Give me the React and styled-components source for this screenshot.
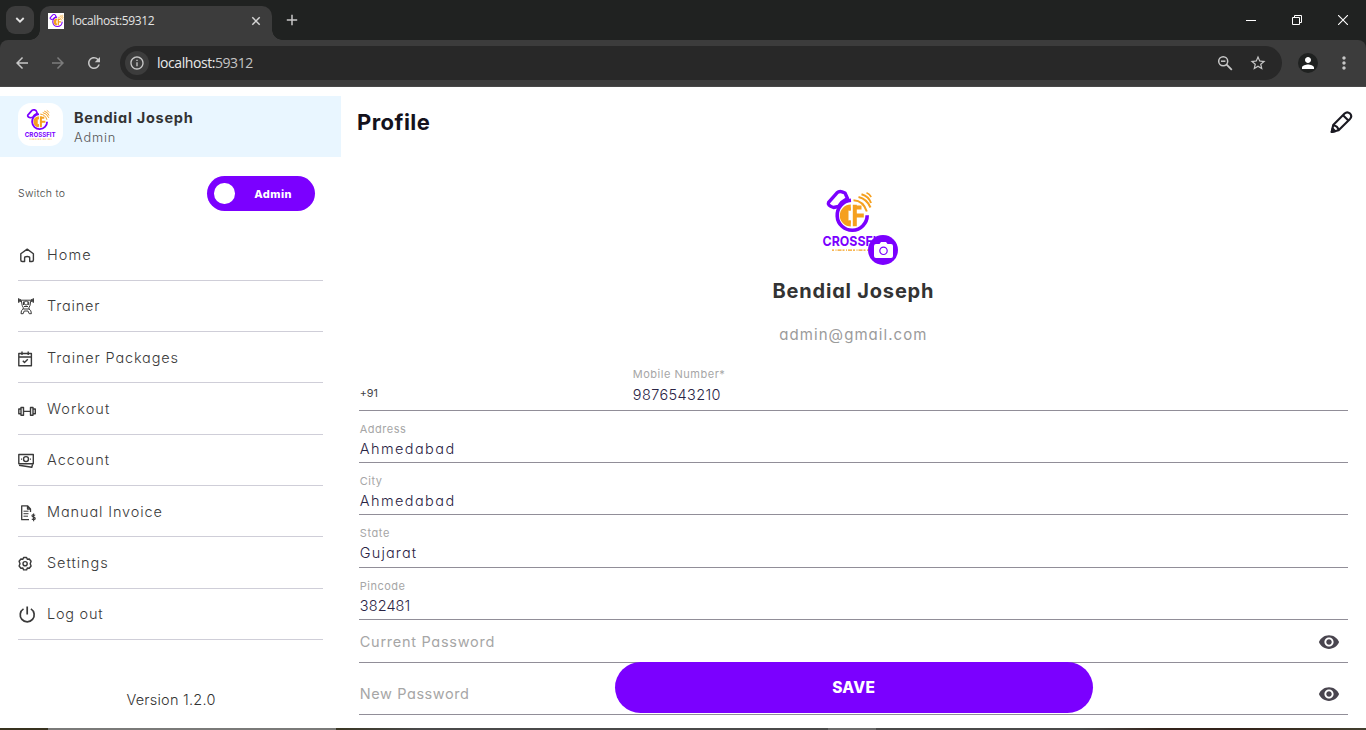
import React from 'react';
import styled, { createGlobalStyle } from 'styled-components';
import { MdArrowBack, MdArrowForward, MdRefresh, MdInfoOutline, MdStarOutline, MdMoreVert, MdPerson, MdVisibility } from 'react-icons/md';

const GlobalStyle = createGlobalStyle`
  * { box-sizing: border-box; }
  body {
    margin: 0;
    background: #fff;
    color: #333;
    font-family: Inter, 'Liberation Sans', sans-serif;
    font-feature-settings: 'cv11';
    overflow: hidden;
  }
  svg { display: block; flex: none; }
`;

/* ---------- shared text ---------- */

const Text = styled.span`
  font-size: ${(p) => p.$size || 14.5}px;
  font-weight: ${(p) => p.$weight || 400};
  letter-spacing: ${(p) => p.$track || 0}px;
  color: ${(p) => p.$color || 'inherit'};
  line-height: ${(p) => (p.$line ? `${p.$line}px` : '20px')};
  white-space: nowrap;
`;

/* ---------- browser frame ---------- */

const Window = styled.div`
  height: 730px;
  width: 1366px;
  display: flex;
  flex-direction: column;
`;

const TabStrip = styled.header`
  height: 40px;
  flex: none;
  display: flex;
  background: #202221;
  padding: 6px 0 0 6px;
`;

const TabSearch = styled.div`
  width: 28px;
  height: 28px;
  border-radius: 9px;
  background: #3c3c3c;
  display: grid;
  place-items: center;
`;

const Tab = styled.div`
  position: relative;
  width: 232px;
  height: 34px;
  margin-left: 6px;
  padding: 0 11px 5px 8px;
  border-radius: 10px 10px 0 0;
  background: #3c3c3c;
  color: #e3e3e3;
  display: flex;
  align-items: center;
  gap: 8px;
  font-family: 'Open Sans', 'Noto Sans', sans-serif;
  &::before,
  &::after {
    content: '';
    position: absolute;
    bottom: 0;
    width: 10px;
    height: 10px;
  }
  &::before {
    left: -10px;
    background: radial-gradient(circle at 0 0, transparent 9.5px, #3c3c3c 10px);
  }
  &::after {
    right: -10px;
    background: radial-gradient(circle at 100% 0, transparent 9.5px, #3c3c3c 10px);
  }
`;

const Favicon = styled.div`
  width: 16px;
  height: 16px;
  background: #fff;
  display: grid;
  place-items: center;
`;

const TabTitle = styled(Text)`
  flex: 1;
`;

const NewTab = styled.div`
  width: 40px;
  height: 28px;
  display: grid;
  place-items: center;
`;

const WindowControls = styled.div`
  display: flex;
  margin-left: auto;
  height: 28px;
`;

const WindowControl = styled.div`
  width: 46px;
  display: grid;
  place-items: center;
`;

const ToolbarBack = styled.div`
  flex: none;
  background: #202221;
`;

const Toolbar = styled.nav`
  height: 47px;
  padding: 0 4px;
  display: flex;
  align-items: center;
  background: #3c3c3c;
  border-bottom: 1px solid #484848;
  border-radius: 8px 8px 0 0;
  color: #c7c7c7;
`;

const ToolButton = styled.div`
  width: 36px;
  display: grid;
  place-items: center;
  color: ${(p) => (p.$dim ? '#7c7c7c' : '#c7c7c7')};
`;

const AddressBar = styled.div`
  flex: 1;
  height: 34px;
  margin: 0 8px;
  padding: 0 8px 0 5px;
  border-radius: 17px;
  background: #282828;
  display: flex;
  align-items: center;
  font-family: 'Open Sans', 'Noto Sans', sans-serif;
`;

const SiteInfo = styled.div`
  width: 24px;
  height: 24px;
  margin-right: 8px;
  border-radius: 50%;
  background: #3c3c3c;
  display: grid;
  place-items: center;
`;

const Url = styled(Text)`
  flex: 1;
  color: #e8e8e8;
  em { font-style: normal; color: #c4c4c4; }
`;

const AddressAction = styled.div`
  width: ${(p) => p.$width || 32}px;
  display: grid;
  place-items: center;
`;

const Account = styled.div`
  width: 20px;
  height: 20px;
  border-radius: 50%;
  background: #1f2120;
  color: #fff;
  display: grid;
  place-items: center;
`;

const Taskbar = styled.footer`
  height: 2px;
  flex: none;
  background: linear-gradient(
    90deg,
    #38321f 0 48px, #7a7a78 48px 336px, #3a3724 336px, #4a4a4a 420px 828px,
    #6b6b6b 828px 876px, #4a4a4a 876px 1080px, #33231a 1160px 1240px, #42402f 1366px
  );
`;

/* ---------- page ---------- */

const Page = styled.div`
  flex: 1;
  min-height: 0;
  display: flex;
  background: #fff;
`;

const Sidebar = styled.aside`
  width: 342px;
  padding-top: 9px;
  display: flex;
  flex-direction: column;
`;

const UserCard = styled.div`
  width: 341.4px;
  height: 61px;
  padding: 0 18px;
  display: flex;
  align-items: center;
  gap: 11px;
  background: #e9f6ff;
`;

const UserLogo = styled.div`
  width: 45px;
  height: 43px;
  margin-bottom: 4px;
  padding: 1px 0 0 3px;
  border-radius: 13px;
  background: #fff;
`;

const UserText = styled.div`
  display: flex;
  flex-direction: column;
  margin-top: 1px;
`;

const SwitchRow = styled.div`
  height: 72.4px;
  padding: 0 27.5px 0 18px;
  display: flex;
  align-items: center;
  justify-content: space-between;
`;

const SwitchLabel = styled(Text)`
  padding-top: 1px;
`;

const Toggle = styled.div`
  width: 108px;
  height: 35.5px;
  margin-top: 1px;
  padding: 0 22.5px 0 7.5px;
  border-radius: 18px;
  background: #7b00ff;
  color: #fff;
  display: flex;
  align-items: center;
  justify-content: space-between;
`;

const Knob = styled.div`
  width: 20.5px;
  height: 20.5px;
  border-radius: 50%;
  background: #fff;
`;

const Menu = styled.ul`
  list-style: none;
  margin: 0 18.6px 0 18px;
  padding: 0;
`;

const MenuItem = styled.li`
  height: 51.33px;
  padding-top: 1px;
  display: flex;
  align-items: center;
  gap: 9px;
  border-bottom: 1px solid #cfced8;
  color: #3a3a3a;
`;

const Version = styled.div`
  margin-top: 48.6px;
  text-align: center;
`;

const Main = styled.main`
  position: relative;
  flex: 1;
  padding: 0 18px 0 17.4px;
  display: flex;
  flex-direction: column;
`;

const PageHeader = styled.div`
  height: 70px;
  margin: 0 -6px 0 -2.4px;
  display: flex;
  align-items: center;
  justify-content: space-between;
`;

const Summary = styled.section`
  height: 199px;
  padding: 23px 0.6px 0 0;
  display: flex;
  flex-direction: column;
  align-items: center;
`;

const Avatar = styled.div`
  position: relative;
  width: 78px;
  height: 78px;
  margin-left: 1.2px;
`;

const CameraBadge = styled.div`
  position: absolute;
  left: 53px;
  top: 54.8px;
  width: 30.5px;
  height: 30.5px;
  border-radius: 50%;
  background: #7b00ff;
  display: grid;
  place-items: center;
`;

const SummaryName = styled(Text)`
  margin-top: 18px;
`;

const SummaryMail = styled(Text)`
  margin-top: 19px;
`;

const Field = styled.div`
  height: ${(p) => p.$height || 52}px;
  padding-top: 11px;
  display: flex;
  flex: none;
  border-bottom: 1px solid #918e98;
  color: #2a2444;
`;

const DialCode = styled.div`
  width: 273px;
  padding: 14px 0 0 0.3px;
`;

const FieldBody = styled.div`
  padding-left: 0.4px;
  display: flex;
  flex-direction: column;
`;

const PasswordField = styled(Field)`
  padding: ${(p) => p.$top}px 8px 0 0.4px;
  align-items: center;
  justify-content: space-between;
`;

const SaveButton = styled.button`
  position: absolute;
  left: 272.7px;
  bottom: 15px;
  width: 478px;
  height: 51.5px;
  padding: 2px 0 0;
  border: 0;
  border-radius: 26px;
  background: #7b00ff;
  color: #fff;
  font-family: inherit;
  font-feature-settings: inherit;
`;

/* ---------- drawings ---------- */

const LogoMark = () => (
  <>
    <path d="M13.600 22.300 22 12.800Q24 11 27 11.800L30 13 32.500 18.500 26.500 22.500 23.500 26.500 18.500 27.500Q12 25.500 13.600 22.300Z" stroke="#7b00ff" strokeWidth="3.400" strokeLinejoin="round" />
    <path d="M36 20.300A15 15 0 1 0 52.200 35.300" stroke="#7b00ff" strokeWidth="3.600" />
    <path d="M35.800 24.500A11 11 0 0 0 35.800 46.500V40.500H33.500V30.500H35.800Z" fill="#f5a01f" />
    <path d="M34.800 30.500V27.500M34.800 40.500V43.500" stroke="#f5a01f" strokeWidth="2" />
    <path d="M39.800 46.300V24.700M38.300 27.400H46.500M40 35.500H48.800" stroke="#f5a01f" strokeWidth="4" />
    <path d="M38.500 20.200Q48.500 20.800 51.800 31.500M43.500 17Q52 19 55.500 27.500M46.500 14.200Q54 16.500 56 23" stroke="#f5a01f" strokeWidth="2" />
    <path d="M51.500 12.800Q54.500 14 56.200 17" stroke="#f5a01f" strokeWidth="1.600" />
  </>
);

const Logo = ({ size }) => (
  <svg width={size} height={size} viewBox="0 0 78 78" fill="none">
    <LogoMark />
    <text x="7.500" y="66" textLength="62" lengthAdjust="spacingAndGlyphs" fontSize="13.700" fontWeight="750" fontFamily="Inter, sans-serif" fill="#7b00ff">CROSSFIT</text>
    <path d="M17 70.200H61" stroke="#f5a01f" strokeWidth="1.300" strokeDasharray="2 1.500 1 1 4 1" />
  </svg>
);

const FaviconMark = () => (
  <svg width="15" height="15" viewBox="10 8 48 46" fill="none">
    <LogoMark />
  </svg>
);

const iconPaths = {
  home: (
    <path d="M2.800 8.800 9.200 4.100 15.400 8.800V15Q15.400 16.500 14 16.500H11.700V12.700Q11.700 11.500 9.200 11.500 6.600 11.500 6.600 12.700V16.500H4.200Q2.800 16.500 2.800 15Z" />
  ),
  trainer: (
    <g strokeWidth="1">
      <path d="M0 4.200H16" />
      <path d="M.7 2.200V6.700M2.200 3V6M13.800 3V6M15.300 2.200V6.700" strokeWidth="1.300" />
      <path d="M3.300 4.500 4.200 9.500 5.200 11.500V13H11V11.500L12 9.500 12.800 4.500M5.500 5.500V9M10.700 5.500V9" />
      <circle cx="8.100" cy="7" r="2" />
      <path d="M6 10.500H10M5.200 13Q2.800 14 3 17.700H5.200L6.200 15H10L11.200 17.700H13.400Q13.400 14 11 13" />
    </g>
  ),
  packages: (
    <>
      <path d="M.8 5.500H13.400V17.700H.8ZM.8 9H13.400M4 3.500V7M10.200 3.500V7" />
      <path d="M4.800 12.800 6.500 14.500 9.800 11.200" />
    </>
  ),
  workout: (
    <path d="M3 8.500H5.500V16.300H3ZM12.500 8.500H15V16.300H12.500ZM5.500 12.400H12.500M3 10H.8V14.800H3M15 10H17.300V14.800H15" />
  ),
  account: (
    <>
      <path d="M.8 4.500H15.300V13.800H.8Z" />
      <circle cx="8" cy="9.100" r="2.500" />
      <path d="M3 9.100H4M12 9.100H13M1 15.300 13.800 17.300 14.600 14.300" />
    </>
  ),
  invoice: (
    <>
      <path d="M12.500 10V7L9.500 3.800H3.700V17.700H11M9.500 3.800V7H12.500" strokeWidth="1.300" />
      <path d="M5.500 9.200H10.500M5.500 11.700H10.500M5.500 14.200H10" strokeWidth="1" />
      <path d="M17.200 13.200Q14 12 14 13.700 14 14.900 15.600 15.100 17.300 15.400 17.200 16.600 17 18.100 13.800 17.200M15.600 11.500V19.300" strokeWidth="1.200" />
    </>
  ),
  settings: (
    <>
      <path d="M5.600 4.500H8.600L9.300 6.300 11.300 6 13.100 8.300 12.200 10.700 13.100 13 11.300 15.300 9.300 15 8.600 16.900H5.600L4.900 15 2.900 15.300 1.100 13 2 10.700 1.100 8.300 2.900 6 4.900 6.300Z" />
      <circle cx="7.100" cy="10.700" r="2.100" />
    </>
  ),
  logout: <path d="M9.200 2.600V10.500M5.500 4.900A7 7 0 1 0 12.900 4.900" strokeWidth="1.700" />,
};

const MenuIcon = ({ name }) => (
  <svg width="20" height="20" viewBox="0 0 20 20" fill="none" stroke="#3a3a3a" strokeWidth="1.400" strokeLinejoin="round">
    {iconPaths[name]}
  </svg>
);

const Pencil = () => (
  <svg width="24" height="24" viewBox="0 0 24 24" fill="none" stroke="#1b1a22" strokeWidth="2.100" strokeLinejoin="round">
    <path d="M1.700 22 3.200 15 14.600 3.500Q17.300 1 20 3.600 22.500 6.200 20 8.900L8.600 20.300Z" />
    <path d="M13 5.200 18.400 10.500M3.300 15.200Q7.800 15.800 8.500 20.200" />
    <path d="M1.700 22 2.600 18.400 5.200 21.200Z" fill="#1b1a22" />
  </svg>
);

/* ---------- data ---------- */

const menu = [
  { icon: 'home', label: 'Home', track: 1.1 },
  { icon: 'trainer', label: 'Trainer', track: 0.8 },
  { icon: 'packages', label: 'Trainer Packages', track: 0.85 },
  { icon: 'workout', label: 'Workout', track: 1.03 },
  { icon: 'account', label: 'Account', track: 1.03 },
  { icon: 'invoice', label: 'Manual Invoice', track: 0.88 },
  { icon: 'settings', label: 'Settings', track: 0.95 },
  { icon: 'logout', label: 'Log out', track: 0.75 },
];

const fields = [
  { label: 'Address', value: 'Ahmedabad', labelTrack: 0.5, track: 1.42 },
  { label: 'City', value: 'Ahmedabad', labelTrack: 0.5, track: 1.42 },
  { label: 'State', value: 'Gujarat', labelTrack: 0.6, track: 1.15, height: 53 },
  { label: 'Pincode', value: '382481', labelTrack: 0.5, track: 0.1 },
];

const Labelled = ({ label, value, labelTrack, track, line = 26 }) => (
  <FieldBody>
    <Text $size={11} $track={labelTrack} $color="#a6a6a6" $line={14}>{label}</Text>
    <Text $weight={350} $track={track} $line={line}>{value}</Text>
  </FieldBody>
);

export default function App() {
  return (
    <Window>
      <GlobalStyle />
      <TabStrip>
        <TabSearch>
          <svg width="10" height="10" viewBox="0 0 10 10" fill="none" stroke="#e3e3e3" strokeWidth="1.800"><path d="M1.300 3 5 6.700 8.700 3" /></svg>
        </TabSearch>
        <Tab>
          <Favicon><FaviconMark /></Favicon>
          <TabTitle $size={12} $track={-0.36}>localhost:59312</TabTitle>
          <svg width="10" height="10" viewBox="0 0 10 10" stroke="#d5d5d5" strokeWidth="1.500"><path d="M1.300 1.300 8.700 8.700M8.700 1.300 1.300 8.700" /></svg>
        </Tab>
        <NewTab>
          <svg width="12" height="12" viewBox="0 0 12 12" stroke="#c7c7c7" strokeWidth="1.500"><path d="M6 .8V11.200M.8 6H11.200" /></svg>
        </NewTab>
        <WindowControls>
          <WindowControl>
            <svg width="10" height="10" viewBox="0 0 10 10" stroke="#fff"><path d="M0 5.500H10" /></svg>
          </WindowControl>
          <WindowControl>
            <svg width="10" height="10" viewBox="0 0 10 10" stroke="#fff" fill="none"><path d="M.5 2.500H7.500V9.500H.5ZM2.500 2.500V.5H9.500V7.500H7.500" /></svg>
          </WindowControl>
          <WindowControl>
            <svg width="10" height="10" viewBox="0 0 10 10" stroke="#fff" strokeWidth="1.100"><path d="M0 0 10 10M10 0 0 10" /></svg>
          </WindowControl>
        </WindowControls>
      </TabStrip>
      <ToolbarBack>
        <Toolbar>
          <ToolButton><MdArrowBack size={18} /></ToolButton>
          <ToolButton $dim><MdArrowForward size={18} /></ToolButton>
          <ToolButton><MdRefresh size={18} /></ToolButton>
          <AddressBar>
            <SiteInfo><MdInfoOutline size={16} /></SiteInfo>
            <Url $size={14} $track={-0.44}>localhost:<em>59312</em></Url>
            <AddressAction>
              <svg width="16" height="16" viewBox="0 0 16 16" fill="none" stroke="#c7c7c7" strokeWidth="1.500">
                <circle cx="6.200" cy="6.200" r="4.500" />
                <path d="M4 6.200H8.400" />
                <path d="M9.400 9.400 14.800 14.800" strokeWidth="1.800" />
              </svg>
            </AddressAction>
            <AddressAction $width={33}><MdStarOutline size={18} /></AddressAction>
          </AddressBar>
          <ToolButton><Account><MdPerson size={18} /></Account></ToolButton>
          <ToolButton><MdMoreVert size={20} /></ToolButton>
        </Toolbar>
      </ToolbarBack>

      <Page>
        <Sidebar>
          <UserCard>
            <UserLogo><Logo size={39} /></UserLogo>
            <UserText>
              <Text $weight={650} $track={0.74}>Bendial Joseph</Text>
              <Text $size={12.8} $track={0.85} $weight={350} $color="#555" $line={19}>Admin</Text>
            </UserText>
          </UserCard>
          <SwitchRow>
            <SwitchLabel $size={10.5} $track={0.25} $weight={350} $color="#444">Switch to</SwitchLabel>
            <Toggle>
              <Knob />
              <Text $size={11} $weight={800} $track={0.45}>Admin</Text>
            </Toggle>
          </SwitchRow>
          <Menu>
            {menu.map((item) => (
              <MenuItem key={item.label}>
                <MenuIcon name={item.icon} />
                <Text $weight={350} $track={item.track}>{item.label}</Text>
              </MenuItem>
            ))}
          </Menu>
          <Version><Text $weight={350} $track={0.24}>Version 1.2.0</Text></Version>
        </Sidebar>

        <Main>
          <PageHeader>
            <Text $size={22} $weight={650} $track={0.45} $line={30} $color="#14121c">Profile</Text>
            <Pencil />
          </PageHeader>
          <Summary>
            <Avatar>
              <Logo size={78} />
              <CameraBadge>
                <svg width="19" height="18" viewBox="0 0 19 18">
                  <path d="M2 3H5.500L7 1H12L13.500 3H17Q19 3 19 5V15Q19 17 17 17H2Q0 17 0 15V5Q0 3 2 3Z" fill="#fff" />
                  <circle cx="9.500" cy="9.800" r="3.700" fill="none" stroke="#7b00ff" strokeWidth="1.200" />
                </svg>
              </CameraBadge>
            </Avatar>
            <SummaryName $size={20} $weight={650} $track={0.8} $line={30}>Bendial Joseph</SummaryName>
            <SummaryMail $size={15} $track={1.05} $color="#9b9b9b">admin@gmail.com</SummaryMail>
          </Summary>

          <Field $height={55}>
            <DialCode><Text $size={10.8} $track={0} $color="#444">+91</Text></DialCode>
            <Labelled label="Mobile Number*" value="9876543210" labelTrack={0.52} track={0.38} line={28} />
          </Field>
          {fields.map((f) => (
            <Field key={f.label} $height={f.height}>
              <Labelled {...f} />
            </Field>
          ))}
          <PasswordField $height={43} $top={1}>
            <Text $track={0.72} $color="#a6a6a6">Current Password</Text>
            <MdVisibility size={22} color="#49454f" />
          </PasswordField>
          <PasswordField $height={52} $top={11}>
            <Text $track={0.58} $color="#a6a6a6">New Password</Text>
            <MdVisibility size={22} color="#49454f" />
          </PasswordField>
          <SaveButton>
            <Text $size={15.5} $weight={800} $track={0.3}>SAVE</Text>
          </SaveButton>
        </Main>
      </Page>
      <Taskbar />
    </Window>
  );
}
